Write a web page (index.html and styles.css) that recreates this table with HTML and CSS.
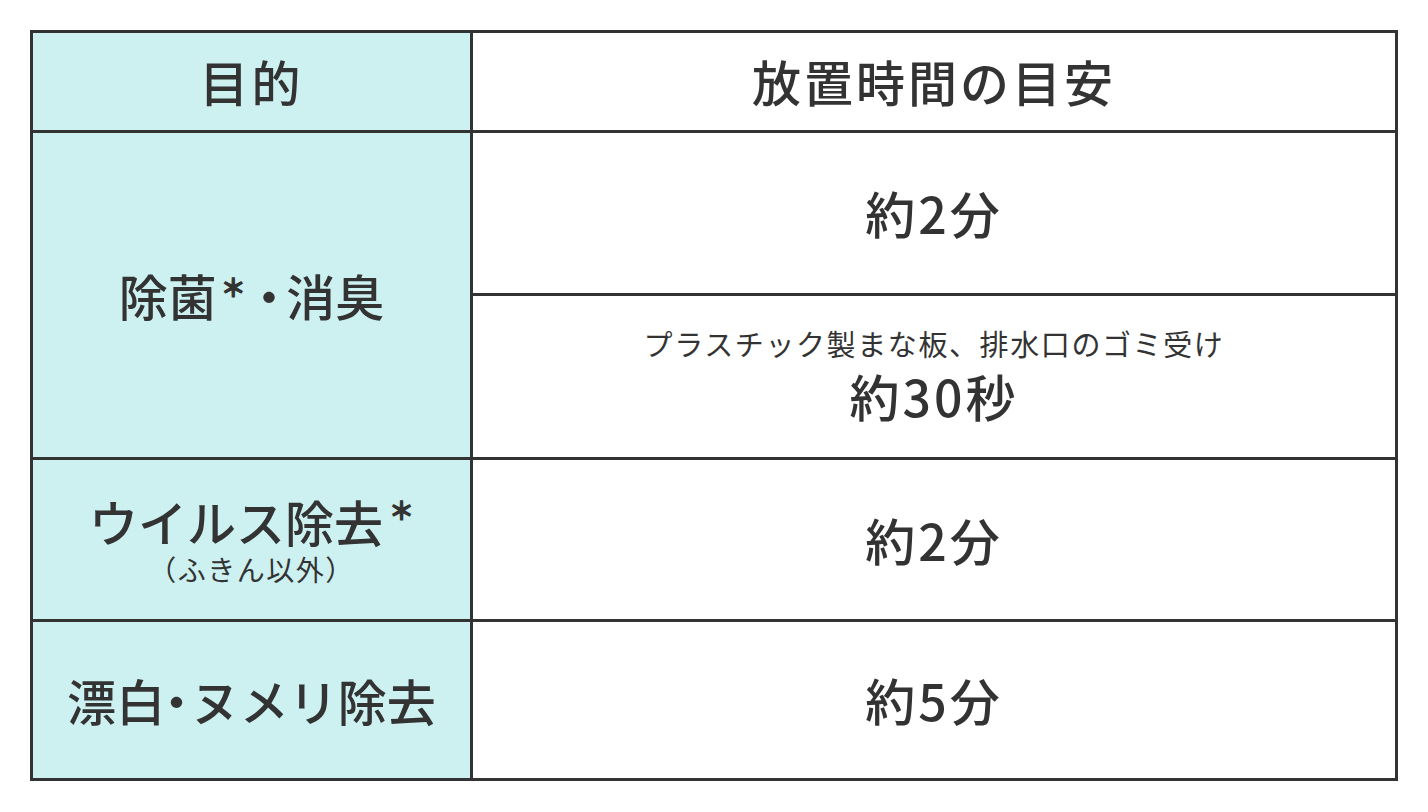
FILE: index.html
```html
<!DOCTYPE html>
<html lang="ja">
<head>
<meta charset="utf-8">
<link rel="stylesheet" href="styles.css">
</head>
<body>
<div class="table">
  <div class="cell head-left">目的</div>
  <div class="cell head-right">放置時間の目安</div>
  <div class="cell left span2">除菌<span class="ast">＊</span><span class="dot dot-wide">・</span>消臭</div>
  <div class="cell right"><span class="big">約2分</span></div>
  <div class="cell right stack"><span class="note">プラスチック製まな板、排水口のゴミ受け</span><span class="big">約30秒</span></div>
  <div class="cell left stack"><span class="line">ウイルス除去<span class="ast sup">＊</span></span><span class="sub">（ふきん以外）</span></div>
  <div class="cell right"><span class="big">約2分</span></div>
  <div class="cell left">漂白<span class="dot dot-tight">・</span>ヌメリ除去</div>
  <div class="cell right"><span class="big">約5分</span></div>
</div>
</body>
</html>
```

FILE: styles.css
```css
html, body {
  margin: 0;
  padding: 0;
  background: #ffffff;
}
body {
  padding: 30px;
  font-family: "Noto Sans CJK JP", "Noto Sans", sans-serif;
  color: #333333;
}
.table {
  width: 1368px;
  box-sizing: border-box;
  display: grid;
  grid-template-columns: 437px 1fr;
  grid-template-rows: 97px 160px 161px 159px 156px;
  gap: 3px;
  padding: 3px;
  background: #333333;
}
.cell {
  display: flex;
  align-items: center;
  justify-content: center;
  font-weight: 500;
  font-size: 49px;
  line-height: 1.2;
}
.head-left, .head-right {
  letter-spacing: 3px;
}
.head-left, .left {
  background: #cdf0f0;
}
.head-right, .right {
  background: #ffffff;
}
.span2 {
  grid-row: span 2;
}
.stack {
  flex-direction: column;
}
.big {
  font-size: 50px;
  letter-spacing: 3px;
  line-height: 1.15;
}
.note {
  font-size: 29px;
  font-weight: 400;
  letter-spacing: 1.6px;
  line-height: 1.3;
  margin-bottom: 4px;
  margin-top: -4px;
}
.dot {
  display: inline-block;
  font-feature-settings: "halt";
}
.dot-wide {
  margin: 0 5px;
}
.dot-tight {
  margin: 0 2px 0 -1px;
}
.ast {
  display: inline-block;
  font-size: 25px;
  font-weight: 700;
  -webkit-text-stroke: 1.2px #333333;
  margin: 0 6px 0 4px;
  transform: translateY(-9px);
}
.line {
  display: flex;
  align-items: center;
}
.ast.sup {
  transform: translateY(-12px);
  margin: 0 0 0 6px;
}
.sub {
  font-size: 28px;
  font-weight: 400;
  letter-spacing: 1.5px;
  line-height: 1.3;
}
```
